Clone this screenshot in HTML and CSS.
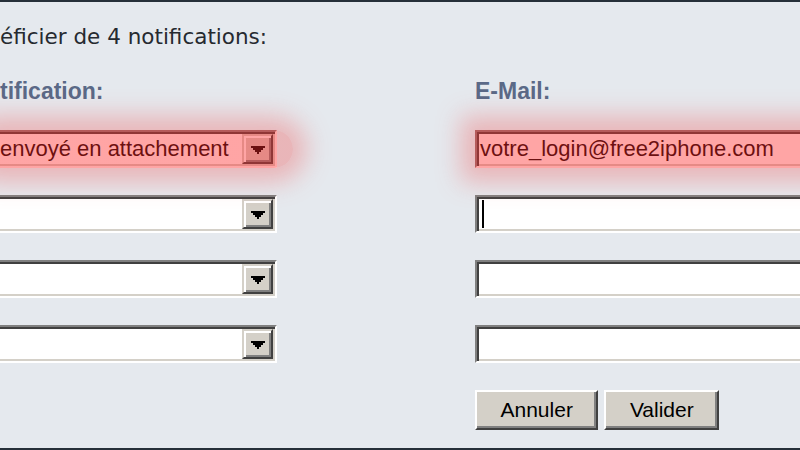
FILE: index.html
```html
<!DOCTYPE html>
<html lang="fr">
<head>
<meta charset="utf-8">
<title>Notifications</title>
<link rel="stylesheet" href="styles.css">
</head>
<body>
<div class="frame">
  <p class="intro">éficier de 4 notifications:</p>
  <div class="form">
    <div class="label label-left">tification:</div>
    <div class="label">E-Mail:</div>

    <div class="select hl hl-select">
      <span class="value">envoyé en attachement</span>
      <span class="drop"><svg width="14" height="8" viewBox="0 0 14 8"><path d="M0 0H14V2H12V4H10V6H8V8H6V6H4V4H2V2H0Z" fill="#000"/></svg></span>
    </div>
    <div class="field hl hl-field"><span class="value">votre_login@free2iphone.com</span></div>

    <div class="select">
      <span class="value"></span>
      <span class="drop"><svg width="14" height="8" viewBox="0 0 14 8"><path d="M0 0H14V2H12V4H10V6H8V8H6V6H4V4H2V2H0Z" fill="#000"/></svg></span>
    </div>
    <div class="field"><span class="caret"></span></div>

    <div class="select">
      <span class="value"></span>
      <span class="drop"><svg width="14" height="8" viewBox="0 0 14 8"><path d="M0 0H14V2H12V4H10V6H8V8H6V6H4V4H2V2H0Z" fill="#000"/></svg></span>
    </div>
    <div class="field"></div>

    <div class="select">
      <span class="value"></span>
      <span class="drop"><svg width="14" height="8" viewBox="0 0 14 8"><path d="M0 0H14V2H12V4H10V6H8V8H6V6H4V4H2V2H0Z" fill="#000"/></svg></span>
    </div>
    <div class="field"></div>

    <div class="spacer"></div>
    <div class="buttons">
      <button class="btn" type="button">Annuler</button>
      <button class="btn" type="button">Valider</button>
    </div>
  </div>
</div>
</body>
</html>
```
FILE: styles.css
```css
html, body {
  margin: 0;
  padding: 0;
}
body {
  width: 800px;
  height: 450px;
  overflow: hidden;
  background: #e5e9ee;
}
.frame {
  height: 446px;
  border-top: 2px solid #262f39;
  border-bottom: 2px solid #262f39;
  background: #e5e9ee;
  overflow: hidden;
}
.intro {
  margin: 23px 0 0 0;
  font-family: "DejaVu Sans", "Liberation Sans", sans-serif;
  font-size: 21.5px;
  line-height: 24px;
  color: #262a30;
  white-space: nowrap;
}
.form {
  margin: 31px 0 0 -6px;
  display: grid;
  grid-template-columns: 283px 360px;
  grid-template-rows: 23px 38px 38px 38px 38px 40px;
  column-gap: 198px;
  row-gap: 27px;
  font-family: "Liberation Sans", Arial, sans-serif;
}
.label {
  font-weight: bold;
  font-size: 23px;
  line-height: 23px;
  color: #5a6987;
  white-space: nowrap;
}
.label-left {
  padding-left: 6px;
}
.select, .field {
  box-sizing: border-box;
  height: 38px;
  border: 2px solid;
  border-color: #808080 #ffffff #ffffff #808080;
  box-shadow: inset 2px 2px 0 #404040, inset -2px -2px 0 #d4d0c8;
  background: #ffffff;
  padding: 2px;
  display: flex;
  align-items: center;
  font-size: 22px;
  color: #000;
  white-space: nowrap;
}
.select .value {
  flex: 1;
  padding-left: 2px;
  overflow: hidden;
}
.field .value {
  padding-left: 1px;
}
.drop {
  box-sizing: border-box;
  width: 31px;
  height: 30px;
  background: #d4d0c8;
  border: 2px solid;
  border-color: #d4d0c8 #404040 #404040 #d4d0c8;
  box-shadow: inset 2px 2px 0 #ffffff, inset -2px -2px 0 #808080;
  display: flex;
  align-items: center;
  justify-content: center;
}
.drop svg {
  display: block;
  margin-top: 1px;
}
.caret {
  display: block;
  width: 2px;
  height: 28px;
  margin-left: 3px;
  background: #000;
}
.hl {
  position: relative;
}
.hl::after {
  content: "";
  position: absolute;
  top: -2px;
  bottom: -2px;
  left: -2px;
  right: -2px;
  background: rgba(255, 40, 40, 0.42);
  box-shadow: 0 0 24px 14px rgba(240, 90, 90, 0.36);
  pointer-events: none;
}
.hl-select::after {
  right: -18px;
  border-radius: 0 22px 22px 0;
  background: linear-gradient(to right, rgba(255, 40, 40, 0.42) 0, rgba(255, 40, 40, 0.42) 283px, rgba(240, 90, 90, 0.36) 283px);
}
.buttons {
  display: flex;
  gap: 6px;
}
.btn {
  box-sizing: border-box;
  height: 40px;
  margin: 0;
  padding: 0 23.5px;
  font-family: "Liberation Sans", Arial, sans-serif;
  font-size: 21px;
  color: #000;
  background: #d4d0c8;
  border: 2px solid;
  border-color: #ffffff #404040 #404040 #ffffff;
  box-shadow: inset -2px -2px 0 #808080;
  border-radius: 0;
  cursor: default;
}
```
